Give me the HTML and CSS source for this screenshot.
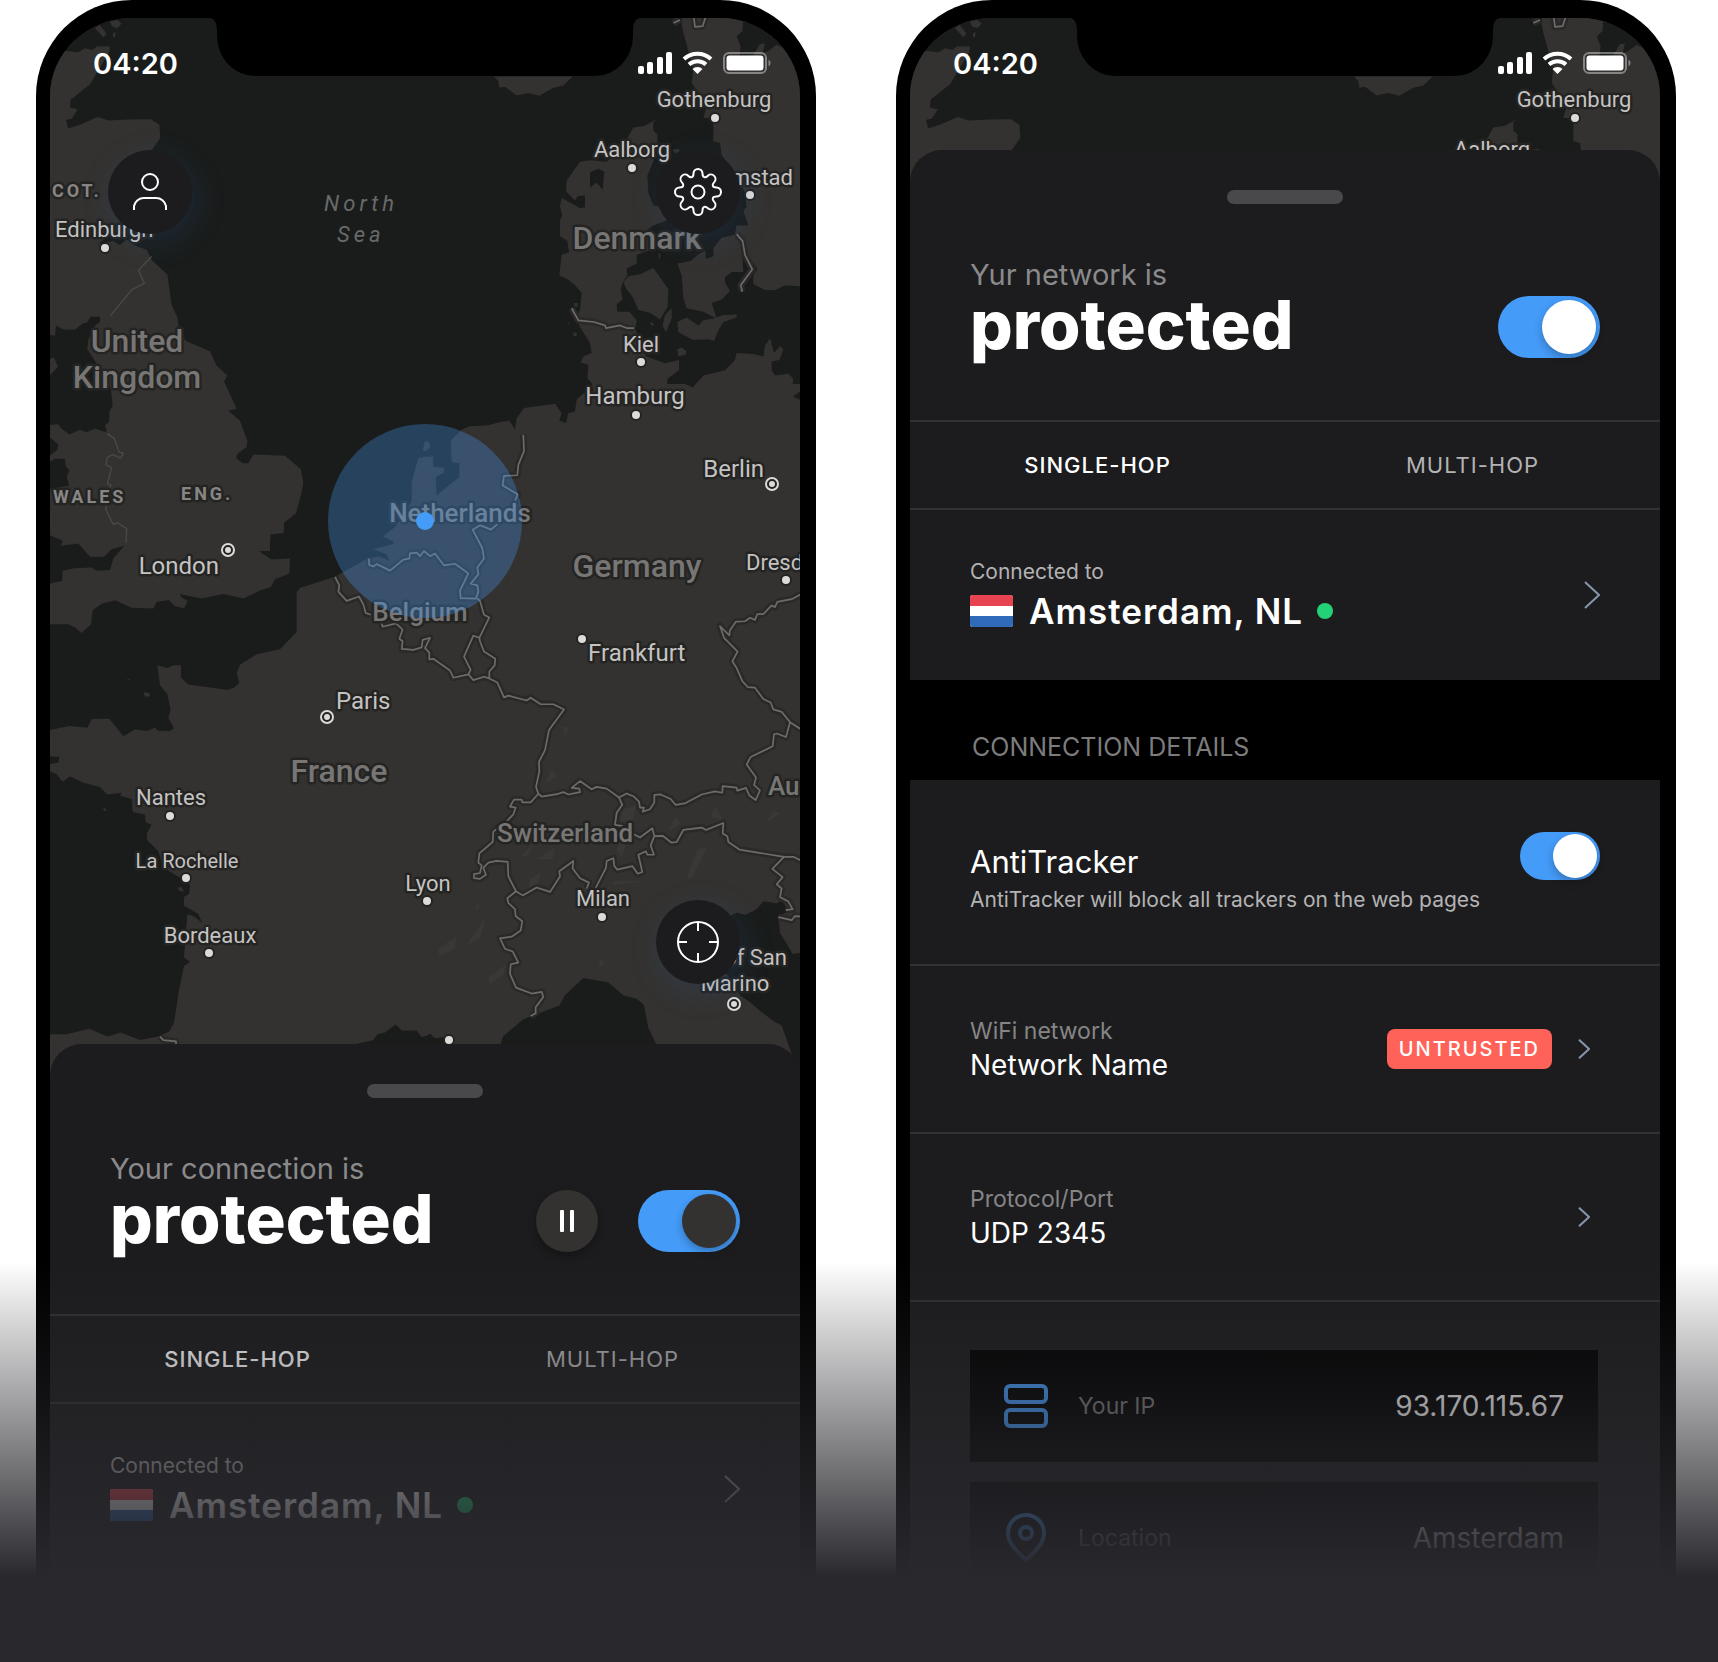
FILE: index.html
```html
<!DOCTYPE html>
<html lang="en">
<head>
<meta charset="utf-8">
<title>VPN app – connection status</title>
<link rel="stylesheet" href="styles.css">
</head>
<body>
<svg class="sprite" aria-hidden="true">
  <symbol id="i-notch" viewBox="0 0 430 58"><path d="M0 0C5 1 7 5 7 14V18A38 40 0 0 0 45 58H385A38 40 0 0 0 423 18V14C423 5 425 1 430 0Z"/></symbol>
  <symbol id="i-status" viewBox="0 0 134 24">
    <g fill="#fff"><rect x="0" y="15" width="6" height="8" rx="2"/><rect x="9" y="11" width="6" height="12" rx="2"/><rect x="19" y="6" width="6" height="17" rx="2"/><rect x="28" y="1" width="6" height="22" rx="2"/></g>
    <g fill="none" stroke="#fff" stroke-width="4"><path d="M46 8A20 20 0 0 1 73 8"/><path d="M51 13.500A13 13 0 0 1 68 13.500"/></g>
    <path d="M59.500 23L54.500 18A7 7 0 0 1 64.500 18Z" fill="#fff"/>
    <rect x="86" y="2" width="42" height="20" rx="5" fill="none" stroke="#fff" stroke-opacity=".4" stroke-width="2"/>
    <rect x="88.500" y="4.500" width="37" height="15" rx="3" fill="#fff"/>
    <path d="M130.500 8.500A4 4 0 0 1 130.500 15.500Z" fill="#fff" fill-opacity=".4"/>
  </symbol>
  <symbol id="i-chevron" viewBox="0 0 16 28"><path d="M1 1L15 14L1 27" fill="none" stroke="#8796ab" stroke-width="2" vector-effect="non-scaling-stroke"/></symbol>
  <symbol id="i-flag" viewBox="0 0 43 32"><rect width="43" height="32" rx="3" fill="#fff"/><path d="M0 11V3A3 3 0 0 1 3 0H40A3 3 0 0 1 43 3V11Z" fill="#e74351"/><path d="M0 21V29A3 3 0 0 0 3 32H40A3 3 0 0 0 43 29V21Z" fill="#2f6abb"/></symbol>

  <defs>
    <g id="lines" fill="none" stroke-linejoin="round">
      <g transform="translate(420 520) scale(.33333 .34439)">
        <path d="M235 10L213 28 180 15 158 28 187 82 192 112 172 138 175 158 152 185 172 190 175 208 168 228 122 227 120 205 145 155 105 127 72 132 45 97 30 105 12 90 0 105 -10 95 -30 97 -32 112 -50 115 -90 147 -130 128 -140 135 -153 130V112"/>
        <path d="M172 228L180 235 192 275 208 283 178 342 180 352 192 382 226 403 224 422 208 440V460L192 455 160 465 145 448 100 458 90 437 40 403 28 405V385L15 372 30 342 8 348 5 370 -20 377 -55 374 -52 352 -62 345 -52 318 -72 300 -112 310 -115 300M178 342L160 336 132 397 152 435 145 448M-255 165L-242 190 -245 208 -220 235 -183 222 -170 245 -163 270 -148 275"/>
        <path d="M208 460L232 472 252 515 265 510 320 524 332 516 362 535 400 535 432 550 387 610 375 668 357 702 358 730 348 775 355 795 332 820 307 820 305 812 282 812 270 832 287 835 280 855 262 873 220 905 218 935 178 968 175 995 185 1003 180 1025 162 1028V1040L180 1042 198 1030 190 1010 205 995 230 990 263 993 265 1035 288 1078 308 1090 350 1067 390 1080 420 1035 418 1020 460 990 458 1012 480 1040 507 1053 500 1070"/>
        <path d="M288 1078L262 1098 265 1112 285 1130 287 1150 307 1165 302 1192 275 1210 240 1215 255 1245 278 1253 295 1285 272 1290 270 1318 288 1358 335 1375 365 1370 370 1385 347 1415V1432L332 1440"/>
        <path d="M355 795L365 803 415 795 430 790 445 797 480 790 478 780 455 778 480 758 515 782 530 775 560 780 597 806 620 794 640 802 657 818 660 835 672 835 668 847 690 840 703 820V798L722 797 752 810 767 827 797 822 845 797 885 788 907 792 908 773 950 777 952 786 978 778 988 800 1007 813 1020 785 1002 770 1008 748 980 710 992 688 1058 657 1062 622 1070 620 1098 630 1110 587"/>
        <path d="M597 806L607 827 590 850 585 885 605 888 640 912 660 922 697 895 703 918 692 945 702 972 682 972 678 962 655 972 667 1022 653 1027 637 1005 592 1015 583 1005 580 982 560 990 558 1010 527 1068M703 918L728 917 755 937 770 935 790 900 845 893 858 900 910 880 908 910 922 918 925 935 958 957 1092 978 1120 978 1150 992M1092 978L1057 1013 1088 1037 1070 1058 1085 1070 1080 1095 1105 1108 1118 1130 1097 1133M1075 1153L1115 1162 1125 1150 1150 1152"/>
        <path d="M1150 212L1115 230 1072 238 1065 253 1055 248 1030 273 1012 273 1005 290 990 284 975 294 948 295 930 320 928 335 900 308 912 342 953 382 937 410 950 430 967 468 983 485 1005 487 1030 520 1052 530 1060 550 1085 557 1110 587 1150 612M-780 1500L-770 1510 -732 1514 -732 1530"/>
      </g>
      <g transform="translate(420 0) scale(.33333 .34439)">
        <path d="M310 1263L312 1310 295 1350 292 1380 252 1382 248 1410 293 1435 285 1455M455 895L475 930 522 935 555 945 558 953 600 945 622 953 642 953M950 680L968 700 975 740 997 782 962 828 967 847M820 40L825 78 848 76 860 40M760 67L780 58"/>
      </g>
    </g>
  </defs>

  <g id="land">
    <rect x="50" y="18" width="750" height="1644" fill="#1a1c1b"/>
    <g fill="#343230">
      <g transform="translate(30 0) scale(.33333 .34439)">
        <path d="M50 150L110 148 145 152 165 140 188 145 200 135 240 135 238 150 205 205 180 245 160 260 122 290 120 312 143 318 125 345 108 348 114 373 150 362 203 340 235 350 300 347 362 346 388 362 391 400 366 435 330 480 300 640 205 708 250 700 270 712 290 695 320 715 350 725 365 755 412 797 425 885 443 925 447 965 468 990 540 1020 560 1062 592 1090 582 1108 620 1187 595 1193 630 1222 652 1280 650 1298 622 1318 618 1330 638 1345 655 1345 670 1320 765 1323 812 1362 820 1400 815 1430 798 1490 762 1518 760 1548 720 1552V1600H50Z"/>
        <path d="M195 82L208 72 230 98 220 108ZM240 62L262 58 275 68 262 82 245 76ZM248 98L257 92 255 108 249 107Z"/>
      </g>
      <g transform="translate(420 0) scale(.33333 .34439)">
        <path d="M222 222L235 235 238 255 255 252 290 277 325 270 358 278 400 255 430 248 458 222Z"/>
        <path d="M-25 1600V1400L-5 1330 28 1325 35 1355 72 1358 72 1372 47 1385 50 1438 118 1385 118 1345 95 1342 92 1280 125 1248 150 1238 205 1235 240 1225 268 1222 285 1247 290 1215 312 1185 405 1172 425 1200 418 1222 438 1228 445 1200 465 1195 470 1160 490 1143 520 1135 515 1112 502 1098 505 1060 482 1052 490 1035 515 1025 510 995 480 950 470 920 480 900 485 850 465 828 445 812 418 800 425 740 447 733 442 700 420 685 420 640 427 625 420 600 425 575 450 588 480 605 495 602 495 568 472 570 465 582 438 555 440 525 480 470 510 465 560 470 600 440 640 370 675 365 712 345 700 355 700 380 712 390 713 425 700 470 682 510 685 560 700 597 720 600 740 640 700 655 680 670 715 690 710 720 650 740 650 765 620 780 622 800 608 820 602 840 608 870 590 883 592 905 628 905 650 930 645 955 655 975 650 1000 680 1035 735 1055 777 1045 777 1075 742 1100 742 1115 795 1115 818 1125 850 1090 915 1075 945 1045 950 1025 1000 1028 1030 1035 1035 1005 1050 982 1062 1025 1080 1005 1090 1015 1078 1045 1055 1050 1055 1075 1065 1090 1105 1085 1120 1100 1118 1115H1150V1600Z"/>
        <path d="M8 1308L14 1283 26 1281 31 1298 18 1310Z"/>
        <path d="M625 802L660 796 700 778 725 812 745 840 743 890 720 928 690 908 655 900 640 865 620 840 610 820Z"/>
        <path d="M772 765L812 758 840 735 856 728 858 752 880 744 880 720 905 690 950 680 965 710 970 790 935 790 915 805 915 820 930 845 905 870 875 880 890 925 850 905 800 895 790 865 785 800Z"/>
        <path d="M772 935L800 922 835 945 850 930 880 925 910 915 950 913 950 922 910 935 895 960 882 990 865 985 820 987 775 965Z"/>
        <path d="M755 895V925L738 965 728 945 735 915ZM772 1015L785 1008 800 1022 795 1030 775 1035ZM688 935L702 940 697 948ZM715 735L722 738 718 755ZM463 880L473 880 472 892 464 890ZM445 935L451 940 445 941ZM460 965L471 967 469 977 461 976ZM757 435L777 432 778 440 768 446Z"/>
        <path d="M785 40V70L790 95 800 130 820 200 815 240 835 270 860 310 850 342 880 345 880 410 900 415 905 450 945 500 975 560 980 600 970 612 985 655 950 655 945 680 975 735 1012 780 1000 800 1000 825 1035 842 1065 843 1095 828 1150 832V40Z"/>
      </g>
      <g transform="translate(30 520) scale(.33333 .34439)">
        <path d="M50 -20H765L760 38 722 38 720 70 683 88 705 102 725 115 780 112 778 155 735 172 722 195 690 205 640 228 580 215 515 228 448 215 455 225 473 235 462 257 435 250 415 232 380 238 370 257 305 255 255 233 215 243 188 262 183 303 155 328 135 312 115 303 50 303Z"/>
        <path d="M1210 -185L1175 -180 1160 -80 1130 -30 1095 20 1058 48 1090 62 1090 70 1030 85 1070 100 1080 118 1045 105 1000 118 915 165 812 197 800 208V325L750 375 680 390 630 420 620 445 628 472 612 488 590 493 530 485 475 478 453 458V422H430L412 430 382 422 390 480 412 505 422 550 415 575 432 605 420 613 385 612 375 603 350 613 315 608 280 628 238 577 185 578 172 603 118 598 50 612V725L80 738 98 760 120 745 160 763 210 775 232 797 275 792 270 800 305 810 308 848 345 855 347 878 365 885 350 910 352 930 385 962 400 1010 470 1050 480 1060 478 1085 462 1095V1120L490 1135 505 1145 517 1170 490 1150 472 1145 462 1270 480 1283 462 1295 448 1360 432 1460 418 1485 385 1500 330 1510 272 1488 232 1500 178 1477 110 1493 50 1493V1700H1210Z"/>
        <path d="M340 500L357 502 360 512 345 513ZM290 461L298 462 297 467ZM219 833L231 843 222 844ZM442 1068L455 1066 462 1078 450 1078Z"/>
      </g>
      <path d="M418 510H802V1200H418Z"/>
    </g>
    <g fill="#1a1c1b">
      <g transform="translate(30 0) scale(.33333 .34439)">
        <path d="M50 970L75 975 78 945 100 957 135 957 160 938 170 937 182 920H210V935L195 945 175 985 172 1015 190 1040 243 1130 248 1180 238 1195 238 1225 225 1235 230 1255 195 1245 170 1255 150 1248 118 1262 95 1245 85 1232 50 1235V1100L84 1065 72 1038 50 1045Z"/>
        <path d="M50 1262L85 1290 83 1305 50 1330ZM50 1345L75 1332 105 1333 108 1355 118 1365 110 1385 118 1410 50 1422Z"/>
      </g>
      <g transform="translate(420 0) scale(.33333 .34439)">
        <path d="M510 500L535 490 553 498 548 552 530 530 510 545ZM970 40L968 90 950 105 962 135 958 165 1000 160 1020 128 1035 126 1028 155 1045 148 1070 130 1150 170V40ZM1118 1152L1150 1130V1165Z"/>
      </g>
      <g transform="translate(30 520) scale(.33333 .34439)">
        <path d="M50 40L98 60 92 75 145 68 180 107 222 107 245 85 283 75 250 112 240 145 200 147 185 138 130 140 98 148 96 177 50 186ZM50 685L88 688 85 705 50 710ZM960 1526L1030 1510 1042 1493 1065 1488 1097 1465 1115 1482 1160 1482 1175 1502 1200 1495 1215 1505 1260 1502V1600H960Z"/>
      </g>
      <g transform="translate(420 520) scale(.33333 .34439)">
        <path d="M-5 1502L20 1500 30 1492 45 1505 95 1500V1600H-5ZM235 1540L250 1498 310 1450 418 1410 435 1380 490 1330 565 1343 610 1380 650 1390 672 1408 685 1475 720 1545Z"/>
        <path d="M900 1300L930 1150 950 1140 975 1147 1010 1130 1030 1107 1070 1113 1085 1105 1100 1125 1118 1132 1075 1150 1080 1200 1100 1230 1118 1260 1150 1255V1640L1115 1550 1085 1468 1060 1455 1020 1425 990 1400 960 1380 930 1330Z"/>
        <path d="M540 775L562 778 597 806 585 800ZM205 990L263 985 263 997 230 996Z"/>
      </g>
    </g>
    <g fill="#3a3836" transform="translate(420 520) scale(.33333 .34439)">
      <path d="M428 600L446 602 436 628ZM375 765L395 726 412 745ZM885 828L908 872 872 862ZM832 955L862 950 815 1040 800 1038ZM745 905L765 860 782 880ZM610 840L648 830 640 870 600 880ZM300 978L345 935 325 975ZM350 985L405 950 398 985ZM580 1050L680 1048 580 1060ZM165 1132L175 1108 178 1130ZM55 1245L110 1208 105 1245 58 1265ZM140 1235L200 1150 180 1215ZM205 1330L258 1290 250 1320 210 1348ZM535 1298L544 1270 553 1292ZM1035 882L1060 845 1082 850ZM600 920L618 940 605 980 590 960ZM330 1040L362 1025 352 1070 325 1072Z"/>
    </g>
    <path d="M365 745L325 785 343 822 305 842 240 918M232 1260L252 1272 268 1313 280 1316 272 1330 248 1320 232 1328 228 1350 245 1358 232 1405 243 1408 230 1440 228 1480 250 1523 262 1518 290 1535 288 1575" transform="translate(30 0) scale(.33333 .34439)" fill="none" stroke="#4a4948" stroke-width="4"/>
    <use href="#lines" class="halo"/>
    <use href="#lines" class="line"/>
  </g>
</svg>

<main class="stage">
  <section class="phone" aria-label="Map view">
    <svg class="map" viewBox="50 18 750 1644" role="img" aria-label="Map of Europe">
      <use href="#land"/>
      <g class="region">
        <text x="52" y="197">COT.</text><text x="53" y="503">WALES</text><text x="181" y="500">ENG.</text>
      </g>
      <g class="sea"><text x="324" y="211">North</text><text x="337" y="242">Sea</text></g>
      <g class="country">
        <text x="137" y="352" text-anchor="middle">United</text><text x="137" y="388" text-anchor="middle">Kingdom</text>
        <text x="637" y="249" text-anchor="middle">Denmark</text><text x="339" y="782" text-anchor="middle">France</text>
        <text x="637" y="577" text-anchor="middle">Germany</text>
      </g>
      <g class="country small">
        <text x="460" y="522" text-anchor="middle">Netherlands</text><text x="420" y="621" text-anchor="middle">Belgium</text>
        <text x="565" y="842" text-anchor="middle">Switzerland</text><text x="768" y="795">Austria</text>
      </g>
      <g class="city">
        <text x="55" y="237">Edinburgh</text><text x="714" y="107" text-anchor="middle">Gothenburg</text>
        <text x="632" y="157" text-anchor="middle">Aalborg</text><text x="793" y="185" text-anchor="end">Halmstad</text>
        <text x="641" y="352" text-anchor="middle">Kiel</text><text x="171" y="805" text-anchor="middle">Nantes</text>
        <text x="187" y="868" text-anchor="middle" class="minor">La Rochelle</text><text x="210" y="943" text-anchor="middle">Bordeaux</text>
        <text x="428" y="891" text-anchor="middle">Lyon</text>
        <text x="746" y="570">Dresden</text><text x="603" y="906" text-anchor="middle">Milan</text>
        <text x="787" y="965" text-anchor="end">of San</text><text x="735" y="991" text-anchor="middle">Marino</text>
      </g>
      <g class="city major">
        <text x="635" y="404" text-anchor="middle">Hamburg</text><text x="764" y="477" text-anchor="end">Berlin</text>
        <text x="219" y="574" text-anchor="end">London</text><text x="336" y="709">Paris</text><text x="588" y="661">Frankfurt</text>
      </g>
      <g class="dots">
        <circle cx="105" cy="248" r="5"/><circle cx="715" cy="118" r="5"/><circle cx="632" cy="168" r="5"/><circle cx="750" cy="195" r="5"/>
        <circle cx="641" cy="362" r="5"/><circle cx="636" cy="415" r="5"/><circle cx="170" cy="816" r="5"/><circle cx="186" cy="878" r="5"/>
        <circle cx="209" cy="953" r="5"/><circle cx="427" cy="901" r="5"/><circle cx="582" cy="639" r="5"/><circle cx="786" cy="580" r="5"/>
        <circle cx="602" cy="917" r="5"/><circle cx="449" cy="1040" r="5"/>
      </g>
      <g class="capitals">
        <circle cx="772" cy="484" r="6"/><circle cx="228" cy="550" r="6"/><circle cx="327" cy="717" r="6"/><circle cx="734" cy="1004" r="6"/>
        <path d="M772 484h0M228 550h0M327 717h0M734 1004h0"/>
      </g>
      <circle cx="425" cy="521" r="97" fill="#449bf8" fill-opacity=".3"/>
      <circle cx="425" cy="521" r="9" fill="#449bf8"/>
    </svg>
    <svg class="notch" aria-hidden="true"><use href="#i-notch"/></svg>
    <header class="status"><time>04:20</time><svg class="status-icons" aria-hidden="true"><use href="#i-status"/></svg></header>
    <div class="map-tools">
      <button class="round" aria-label="Account"><svg viewBox="-25 -25 50 50"><circle cy="-10" r="8"/><path d="M-16 18V14A10 10 0 0 1 -6 6H6A10 10 0 0 1 16 14V18"/></svg></button>
      <button class="round" aria-label="Settings"><svg viewBox="-25 -25 50 50"><circle r="6.500"/><path d="M-4.500 -18.500A4.500 4.500 0 0 1 4.500 -18.500C4.500 -14.500 7.070 -13.430 9.900 -16.260A4.500 4.500 0 0 1 16.260 -9.900C13.430 -7.070 14.500 -4.500 18.500 -4.500A4.500 4.500 0 0 1 18.500 4.500C14.500 4.500 13.430 7.070 16.260 9.900A4.500 4.500 0 0 1 9.900 16.260C7.070 13.430 4.500 14.500 4.500 18.500A4.500 4.500 0 0 1 -4.500 18.500C-4.500 14.500 -7.070 13.430 -9.900 16.260A4.500 4.500 0 0 1 -16.260 9.900C-13.430 7.070 -14.500 4.500 -18.500 4.500A4.500 4.500 0 0 1 -18.500 -4.500C-14.500 -4.500 -13.430 -7.070 -16.260 -9.900A4.500 4.500 0 0 1 -9.900 -16.260C-7.070 -13.430 -4.500 -14.500 -4.500 -18.500Z"/></svg></button>
      <button class="round locate" aria-label="Find my location"><svg viewBox="-25 -25 50 50"><circle r="20"/><path d="M0 -20V-11M0 20V11M-20 0H-11M20 0H11"/></svg></button>
    </div>
    <div class="sheet">
      <div class="handle"></div>
      <div class="hero">
        <label class="hero-text" for="vpn-1"><span class="lead">Your connection is</span><strong>protected</strong></label>
        <div class="hero-controls">
          <button class="pause" aria-label="Pause"><svg viewBox="0 0 14 22"><rect width="4" height="22" rx="1"/><rect x="10" width="4" height="22" rx="1"/></svg></button>
          <input id="vpn-1" class="toggle dark" type="checkbox" role="switch" checked>
        </div>
      </div>
      <nav class="tabs"><button class="tab active">SINGLE-HOP</button><button class="tab">MULTI-HOP</button></nav>
      <a class="server" href="#">
        <span class="server-text"><span class="caption">Connected to</span><span class="server-name"><svg class="flag" aria-hidden="true"><use href="#i-flag"/></svg>Amsterdam, NL<i class="online"></i></span></span>
        <svg class="chevron large" aria-hidden="true"><use href="#i-chevron"/></svg>
      </a>
    </div>
  </section>

  <section class="phone" aria-label="Connection details">
    <svg class="map" viewBox="50 18 750 1644" role="img" aria-label="Map of Europe">
      <use href="#land"/>
      <g class="city"><text x="714" y="107" text-anchor="middle">Gothenburg</text><text x="632" y="157" text-anchor="middle">Aalborg</text></g>
      <g class="dots"><circle cx="715" cy="118" r="5"/></g>
    </svg>
    <svg class="notch" aria-hidden="true"><use href="#i-notch"/></svg>
    <header class="status"><time>04:20</time><svg class="status-icons" aria-hidden="true"><use href="#i-status"/></svg></header>
    <div class="sheet open">
      <div class="handle"></div>
      <div class="hero">
        <label class="hero-text" for="vpn-2"><span class="lead">Yur network is</span><strong>protected</strong></label>
        <div class="hero-controls"><input id="vpn-2" class="toggle" type="checkbox" role="switch" checked></div>
      </div>
      <nav class="tabs"><button class="tab active">SINGLE-HOP</button><button class="tab">MULTI-HOP</button></nav>
      <a class="server" href="#">
        <span class="server-text"><span class="caption">Connected to</span><span class="server-name"><svg class="flag" aria-hidden="true"><use href="#i-flag"/></svg>Amsterdam, NL<i class="online"></i></span></span>
        <svg class="chevron large" aria-hidden="true"><use href="#i-chevron"/></svg>
      </a>
      <h2 class="group-title">CONNECTION DETAILS</h2>
      <div class="row tracker">
        <label for="tracker" class="tracker-text"><span class="tracker-title">AntiTracker</span><span class="tracker-note">AntiTracker will block all trackers on the web pages</span></label>
        <input id="tracker" class="toggle compact" type="checkbox" role="switch" checked>
      </div>
      <a class="row" href="#">
        <span class="pair"><span class="key">WiFi network</span><span class="value">Network Name</span></span>
        <span class="badge">UNTRUSTED</span>
        <svg class="chevron" aria-hidden="true"><use href="#i-chevron"/></svg>
      </a>
      <a class="row" href="#">
        <span class="pair"><span class="key">Protocol/Port</span><span class="value">UDP 2345</span></span>
        <svg class="chevron" aria-hidden="true"><use href="#i-chevron"/></svg>
      </a>
      <div class="cards">
        <div class="card">
          <svg class="card-icon" viewBox="0 0 44 44" aria-hidden="true"><rect x="2" y="2" width="40" height="16" rx="4"/><rect x="2" y="26" width="40" height="16" rx="4"/></svg>
          <span class="card-key">Your IP</span><span class="card-value">93.170.115.67</span>
        </div>
        <div class="card">
          <svg class="card-icon" viewBox="0 0 44 44" aria-hidden="true"><path d="M22 44C14 36 4 28 4 17A18 18 0 0 1 40 17C40 28 30 36 22 44Z"/><circle cx="22" cy="17" r="6"/></svg>
          <span class="card-key">Location</span><span class="card-value">Amsterdam</span>
        </div>
      </div>
    </div>
  </section>
  <div class="fade"></div>
</main>
</body>
</html>
```
FILE: styles.css
```css
* { box-sizing: border-box; }
body { margin: 0; background: #fff; font-family: Inter, "Liberation Sans", sans-serif; color: #fff; }
button { font: inherit; color: inherit; background: none; border: 0; padding: 0; cursor: pointer; }
a { color: inherit; text-decoration: none; }
.sprite { position: absolute; width: 0; height: 0; }

.stage { position: relative; display: grid; grid-template-columns: 1fr 1fr; gap: 80px; padding: 0 42px 0 36px; }
.phone {
  position: relative; display: flex; flex-direction: column; min-width: 0; overflow: hidden;
  background: #000; border: solid #000; border-width: 18px 16px 0 14px; border-radius: 96px 96px 0 0;
}
.fade { position: absolute; left: 0; right: 0; bottom: 0; height: 400px; pointer-events: none; background: linear-gradient(#29282d00, #29282d 315px); }

/* Map */
.map { position: absolute; top: 0; left: 0; width: 100%; height: auto; background: #1a1c1b; }
.map text { font-family: Roboto, "Liberation Sans", sans-serif; paint-order: stroke; stroke: #242423; stroke-width: 5px; stroke-linejoin: round; }
.halo { stroke: #2a2928; stroke-width: 20; }
.line { stroke: #6c6b6b; stroke-width: 5; }
.city { font-size: 22px; fill: #c4c3c2; }
.city .minor { font-size: 20px; }
.major { font-size: 24px; }
.country { font-size: 32px; font-weight: 500; fill: #777675; }
.small { font-size: 26px; }
.region { font-size: 18px; font-weight: 700; letter-spacing: 3px; fill: #878685; }
.sea { font-size: 22px; font-style: italic; letter-spacing: 4px; fill: #686a69; }
.map .sea text { stroke: none; }
.dots { fill: #dcdbda; stroke: #232322; stroke-width: 2px; }
.capitals { fill: #232322; stroke: #dcdbda; stroke-width: 2px; }
.capitals path { stroke-width: 6px; stroke-linecap: round; }

.notch { position: absolute; top: 0; left: 50%; width: 430px; height: 58px; margin-left: -215px; }
.status { position: relative; display: flex; align-items: center; justify-content: space-between; height: 90px; padding: 0 28px 0 43px; }
.status time { font-size: 29px; font-weight: 600; }
.status-icons { width: 134px; height: 24px; }

.map-tools { position: relative; flex: 1; display: grid; grid-template-columns: auto auto; justify-content: space-between; align-content: space-between; padding: 42px 60px 60px 58px; }
.round { display: grid; place-items: center; width: 84px; height: 84px; border-radius: 50%; background: #1c1c1e; box-shadow: 4px 8px 32px #2b62a833; }
.round svg { width: 50px; height: 50px; fill: none; stroke: #fff; stroke-width: 2px; }
.locate { grid-column: 2; }

/* Bottom sheet */
.sheet { position: relative; background: #1c1c1e; border-radius: 32px 32px 0 0; padding: 40px 0 88px; }
.sheet.open { margin-top: 42px; padding-bottom: 0; }
.handle { width: 116px; height: 14px; margin: 0 auto; border-radius: 7px; background: #49494b; }
.hero { display: flex; justify-content: space-between; align-items: flex-end; padding: 54px 60px 62px; }
.hero-text { display: flex; flex-direction: column; }
.lead { font-size: 29px; line-height: 34px; color: #8a8a8b; }
.hero-text strong { font-size: 67px; line-height: 66px; font-weight: 800; }
.hero-controls { display: flex; gap: 40px; }
.pause { display: grid; place-items: center; width: 62px; height: 62px; border-radius: 50%; background: #333230; box-shadow: 0 4px 8px #0000004d; }
.pause svg { width: 14px; height: 22px; fill: #fff; }

.toggle { appearance: none; display: flex; justify-content: flex-end; align-items: center; width: 102px; height: 62px; margin: 0; padding: 0 4px; border-radius: 31px; background: #449bf8; flex: none; cursor: pointer; }
.toggle::before { content: ""; width: 54px; height: 54px; border-radius: 50%; background: #fff; box-shadow: 0 4px 8px #00000040; }
.toggle:not(:checked) { justify-content: flex-start; background: #49494b; }
.toggle.dark::before { background: #333230; }
.toggle.compact { width: 80px; height: 48px; padding: 0 3px; border-radius: 24px; }
.toggle.compact::before { width: 44px; height: 44px; }

.tabs { display: grid; grid-template-columns: 1fr 1fr; height: 90px; border: solid #303035; border-width: 2px 0; }
.tab { font-size: 22px; letter-spacing: 1px; color: #b3b3b4; }
.tab.active { font-weight: 500; color: #fff; }

.server { display: flex; justify-content: space-between; align-items: center; padding: 48px 60px; }
.server-text { display: flex; flex-direction: column; gap: 4px; }
.caption { font-size: 21px; line-height: 28px; color: #b3b3b4; }
.server-name { display: flex; align-items: center; font-size: 35px; line-height: 42px; font-weight: 600; letter-spacing: 1px; }
.flag { width: 43px; height: 32px; margin-right: 16px; }
.online { width: 16px; height: 16px; margin-left: 14px; border-radius: 50%; background: #23d176; }
.chevron { width: 12px; height: 20px; flex: none; }
.chevron.large { width: 16px; height: 28px; }

.group-title { margin: 0; padding: 52px 62px 18px; background: #000; font-size: 25px; line-height: 30px; font-weight: 400; color: #7c7c7d; }
.row { display: flex; align-items: center; padding: 49px 70px 49px 60px; border-bottom: 2px solid #303035; }
.pair { display: flex; flex-direction: column; margin-right: auto; }
.key { font-size: 23px; line-height: 32px; color: #858586; }
.value { font-size: 28px; line-height: 36px; }
.tracker { align-items: flex-start; justify-content: space-between; padding: 52px 60px 46px; }
.tracker-text { display: flex; flex-direction: column; padding-top: 10px; }
.tracker-title { font-size: 31px; line-height: 40px; }
.tracker-note { font-size: 21px; line-height: 36px; color: #b3b3b4; }
.badge { padding: 8px 12px; margin-right: 26px; border-radius: 8px; background: #ff6259; font-size: 20px; line-height: 24px; font-weight: 500; letter-spacing: 2px; }

.cards { display: flex; flex-direction: column; gap: 20px; padding: 48px 62px 68px 60px; }
.card { display: flex; align-items: center; padding: 34px; background: #000; }
.card-icon { width: 44px; height: 44px; margin-right: 30px; fill: none; stroke: #449bf8; stroke-width: 4px; overflow: visible; }
.card-key { margin-right: auto; font-size: 23px; line-height: 28px; color: #7c7c7d; }
.card-value { font-size: 28px; line-height: 36px; }
```
